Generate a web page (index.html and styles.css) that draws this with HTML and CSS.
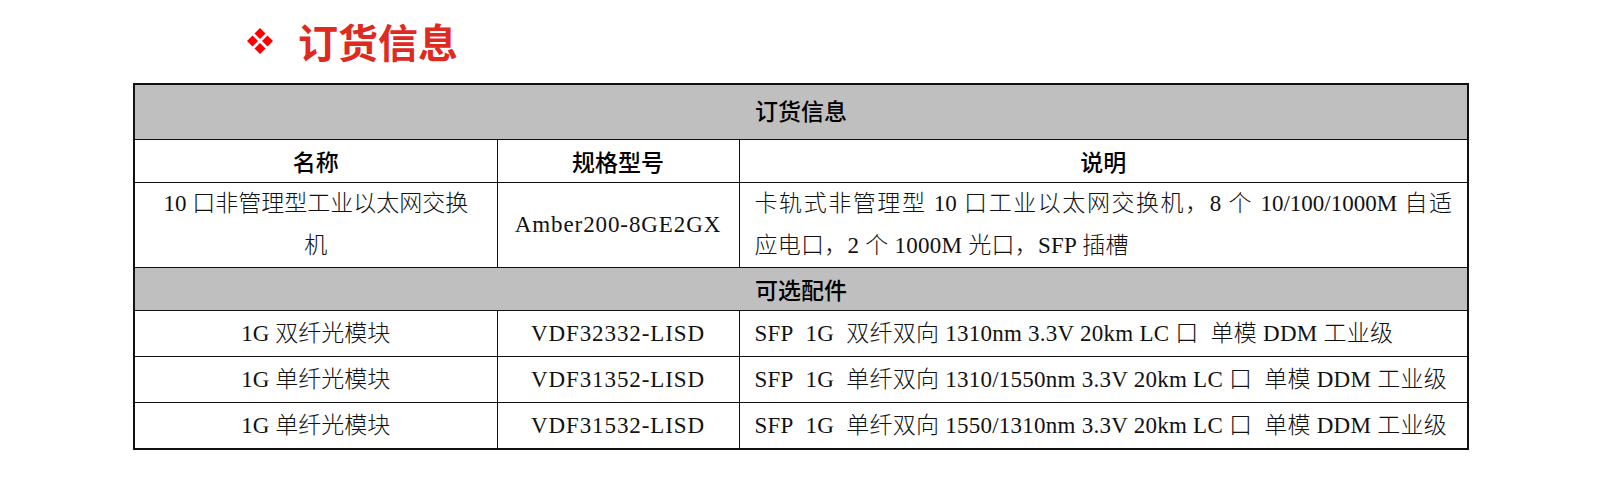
FILE: index.html
```html
<!DOCTYPE html>
<html lang="zh-CN">
<head>
<meta charset="utf-8">
<title>订货信息</title>
<link rel="stylesheet" href="styles.css">
</head>
<body>
<div class="page">
  <h1 class="title">
    <svg class="title-icon" width="28" height="28" viewBox="0 0 28 28" aria-hidden="true">
      <polygon points="14,1 19.5,6.5 14,12 8.5,6.5" fill="#ff0000"/>
      <polygon points="6.5,8.5 12,14 6.5,19.5 1,14" fill="#ff0000"/>
      <polygon points="21.5,8.5 27,14 21.5,19.5 16,14" fill="#ff0000"/>
      <polygon points="14,16 19.5,21.5 14,27 8.5,21.5" fill="#ff0000"/>
    </svg>
    <span class="title-text">订货信息</span>
  </h1>
  <table class="order">
    <colgroup>
      <col class="c-name">
      <col class="c-model">
      <col class="c-desc">
    </colgroup>
    <tr class="r-section r-top"><th colspan="3">订货信息</th></tr>
    <tr class="r-head"><th>名称</th><th>规格型号</th><th>说明</th></tr>
    <tr class="r-double">
      <td class="center">10 口非管理型工业以太网交换<br>机</td>
      <td class="center model">Amber200-8GE2GX</td>
      <td class="desc"><span class="line line-just">卡轨式非管理型 10 口工业以太网交换机，8 个 10/100/1000M 自适</span><span class="line">应电口，2 个 1000M 光口，SFP 插槽</span></td>
    </tr>
    <tr class="r-section"><th colspan="3">可选配件</th></tr>
    <tr class="r-item">
      <td class="center">1G 双纤光模块</td>
      <td class="center model">VDF32332-LISD</td>
      <td class="desc">SFP&nbsp; 1G&nbsp; 双纤双向 1310nm 3.3V 20km LC 口&nbsp; 单模 DDM 工业级</td>
    </tr>
    <tr class="r-item">
      <td class="center">1G 单纤光模块</td>
      <td class="center model">VDF31352-LISD</td>
      <td class="desc">SFP&nbsp; 1G&nbsp; 单纤双向 1310/1550nm 3.3V 20km LC 口&nbsp; 单模 DDM 工业级</td>
    </tr>
    <tr class="r-item">
      <td class="center">1G 单纤光模块</td>
      <td class="center model">VDF31532-LISD</td>
      <td class="desc">SFP&nbsp; 1G&nbsp; 单纤双向 1550/1310nm 3.3V 20km LC 口&nbsp; 单模 DDM 工业级</td>
    </tr>
  </table>
</div>
</body>
</html>
```
FILE: styles.css
```css
html, body {
  margin: 0;
  padding: 0;
  background: #ffffff;
}

.page {
  width: 1600px;
  height: 492px;
  font-family: "Liberation Serif", "Noto Sans CJK SC", serif;
  color: #000000;
}

.title {
  margin: 0;
  height: 83px;
  padding-left: 246px;
  display: flex;
  align-items: center;
  gap: 24px;
  box-sizing: border-box;
  padding-bottom: 2px;
}

.title-icon {
  display: block;
  flex: none;
}

.title-text {
  font-family: "Noto Sans CJK SC", sans-serif;
  font-size: 40px;
  font-weight: 700;
  color: #de2a1f;
  line-height: 1;
}

.order {
  margin-left: 133px;
  width: 1334px;
  border-collapse: collapse;
  table-layout: fixed;
  border: 2px solid #111111;
  font-size: 23px;
}

.c-name { width: 363px; }
.c-model { width: 242px; }
.c-desc { width: 729px; }

.order th,
.order td {
  border: 1px solid #111111;
  padding: 0;
  line-height: 42px;
  vertical-align: middle;
  font-weight: 300;
  color: #111111;
}

.order th {
  font-family: "Noto Sans CJK SC", sans-serif;
  font-weight: 500;
  text-align: center;
  color: #000000;
}

.r-section th {
  background: #bfbfbf;
  height: 42px;
}

.r-top th {
  height: 50px;
  padding-bottom: 4px;
}

.r-head th {
  height: 41px;
}

.r-double td {
  height: 84px;
}

.r-item td {
  height: 45px;
}

.center {
  text-align: center;
}

.model {
  letter-spacing: 0.9px;
}

.desc {
  text-align: left;
  padding: 0 15px !important;
  white-space: nowrap;
  letter-spacing: 0.25px;
}

.line {
  display: block;
}

.line-just {
  text-align: justify;
  text-align-last: justify;
  letter-spacing: 0;
}
```
